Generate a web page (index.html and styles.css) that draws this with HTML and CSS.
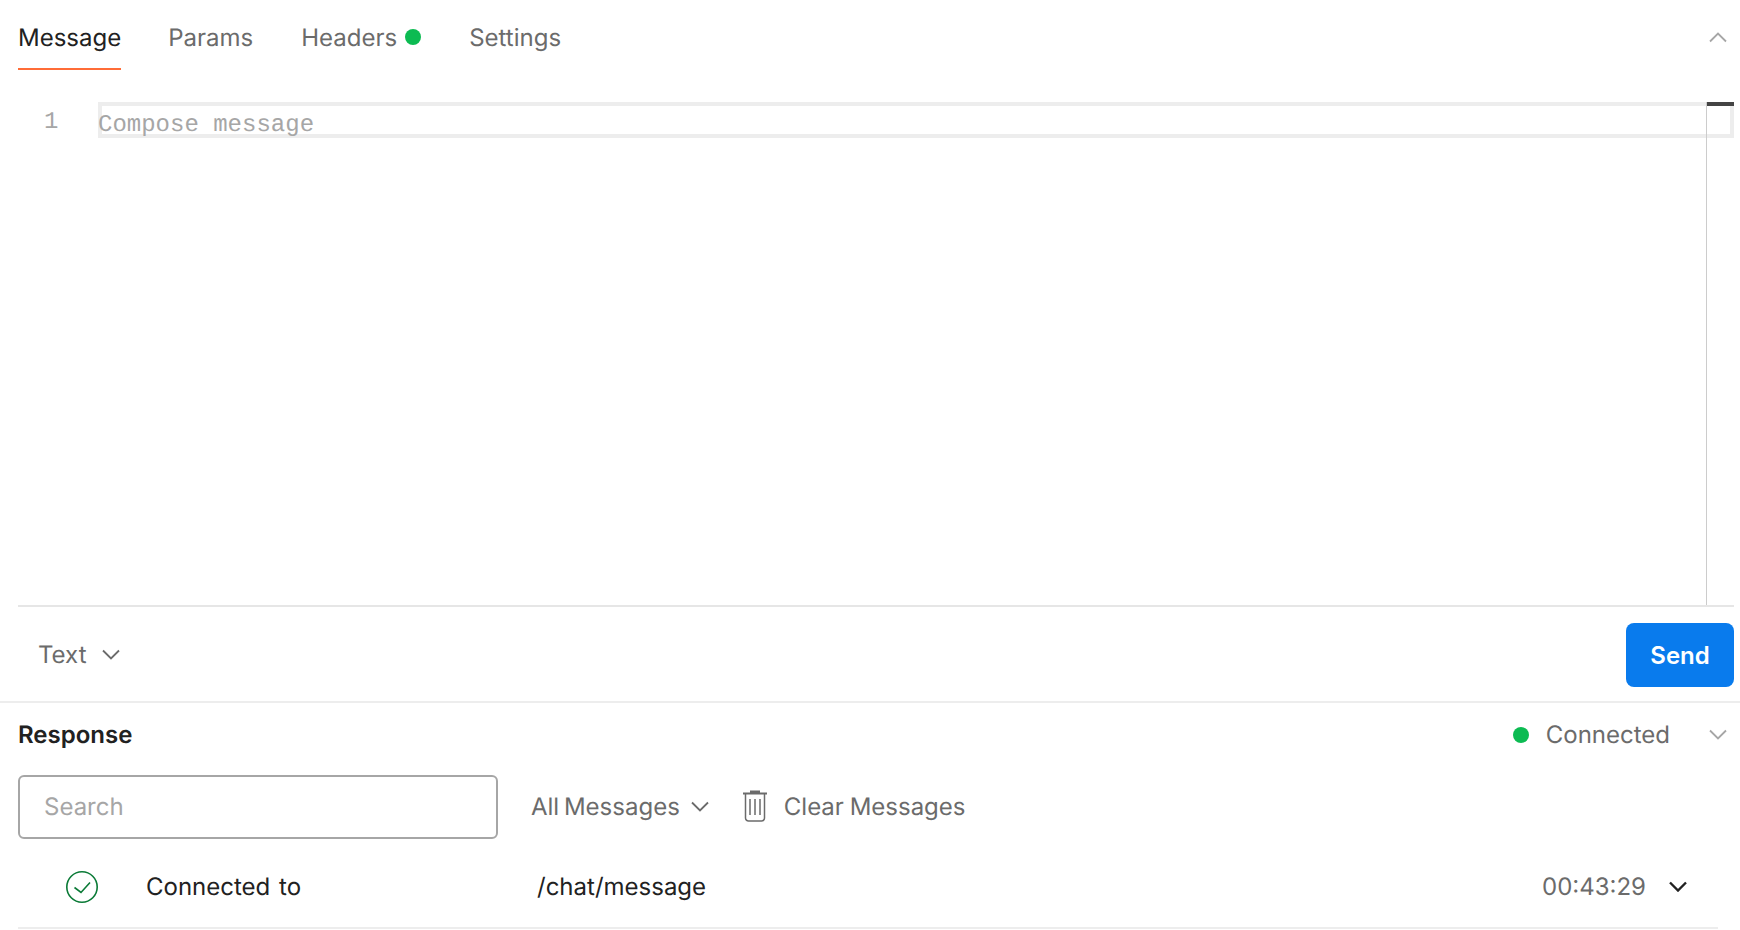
FILE: index.html
```html
<!DOCTYPE html>
<html lang="en">
<head>
<meta charset="utf-8">
<title>Message</title>
<link rel="stylesheet" href="styles.css">
</head>
<body>
<main class="app">
  <nav class="tabs">
    <a class="tab active">Message</a>
    <a class="tab">Params</a>
    <a class="tab">Headers<span class="dot tab-dot"></span></a>
    <a class="tab">Settings</a>
    <svg class="chev push" viewBox="0 0 18 11"><path d="M1 9.500l8-8 8 8"/></svg>
  </nav>
  <section class="editor">
    <div class="gutter">1</div>
    <div class="line">Compose message</div>
    <div class="scrollbar"></div>
  </section>
  <section class="composer">
    <div class="type">Text<svg class="chev dark" viewBox="0 0 18 11"><path d="M1 1.500l8 8 8-8"/></svg></div>
    <button class="send">Send</button>
  </section>
  <section class="response">
    <header class="resp-head">
      <h2 class="resp-title">Response</h2>
      <div class="status"><span class="dot"></span><span class="status-text">Connected</span></div>
      <svg class="chev head-chev" viewBox="0 0 18 11"><path d="M1 1.500l8 8 8-8"/></svg>
    </header>
    <div class="toolbar">
      <div class="search">Search</div>
      <div class="filter">All Messages<svg class="chev dark" viewBox="0 0 18 11"><path d="M1 1.500l8 8 8-8"/></svg></div>
      <div class="clear">
        <svg class="trash" viewBox="0 0 24 32"><path class="lid" d="M0 3.500h24M8 3V1.500h8V3"/><path d="M2.500 4v24a3 3 0 0 0 3 3h13a3 3 0 0 0 3-3V4M7 9v16M12 9v16M17 9v16"/></svg>
        <span>Clear Messages</span>
      </div>
    </div>
    <div class="row">
      <svg class="check" viewBox="0 0 32 32"><circle cx="16" cy="16" r="15.200"/><path d="M8.500 16.500l6.500 5 9-10"/></svg>
      <span class="row-label">Connected to</span>
      <span class="row-path">/chat/message</span>
      <span class="row-time">00:43:29</span>
      <svg class="chev black" viewBox="0 0 18 11"><path d="M1 1.500l8 8 8-8"/></svg>
    </div>
  </section>
</main>
</body>
</html>
```
FILE: styles.css
```css
* { box-sizing: border-box; }
html, body { margin: 0; height: 100%; background: #fff; }
body { font-family: Inter, "Liberation Sans", sans-serif; font-size: 24px; color: #6b6b6b; overflow: hidden; text-rendering: geometricPrecision; }
.app { display: flex; flex-direction: column; height: 930px; }

.tabs { display: flex; align-items: center; gap: 48px; height: 70px; padding: 0 12px 0 18px; flex: none; }
.tab { display: flex; align-items: center; height: 70px; border-bottom: 2px solid transparent; padding-top: 6px; }
.tab.active { color: #212121; border-bottom-color: #ff6c37; margin-right: -1px; }
.dot { display: block; width: 16px; height: 16px; border-radius: 50%; background: #0cbb52; flex: none; }
.tab-dot { margin-left: 8px; }
.chev { width: 18px; height: 11px; fill: none; stroke: #a6a6a6; stroke-width: 1.800; flex: none; }
.chev.dark { stroke: #6b6b6b; }
.chev.black { stroke: #212121; stroke-width: 2.400; }
.push { margin-left: auto; margin-top: 4px; margin-right: 1px; }

.editor { position: relative; display: flex; align-items: flex-start; height: 537px; margin: 0 6px 0 18px; padding-top: 32px; border-bottom: 2px solid #e6e6e6; flex: none; }
.gutter { width: 80px; padding-left: 26px; padding-top: 5px; font-family: "Liberation Mono", monospace; color: #a6a6a6; line-height: 32px; }
.line { flex: 1; height: 36px; border: 4px solid #ededed; font-family: "Liberation Mono", monospace; color: #a6a6a6; line-height: 40px; text-indent: -4px; }
.scrollbar { position: absolute; top: 32px; right: 0; bottom: 0; width: 28px; border-left: 1px solid #ccc; }
.scrollbar::before { content: ""; display: block; height: 4px; background: #444; }

.composer { display: flex; align-items: center; justify-content: space-between; height: 96px; padding: 0 6px 0 38px; border-bottom: 2px solid #ededed; flex: none; }
.type { display: flex; align-items: center; gap: 15px; }
.send { width: 108px; height: 64px; margin-top: 2px; border: 0; border-radius: 8px; background: #097bed; color: #fff; font: 600 24px Inter, "Liberation Sans", sans-serif; }

.response { display: flex; flex-direction: column; padding: 0 12px 0 18px; flex: 1; }
.resp-head { display: flex; align-items: center; height: 63px; flex: none; }
.resp-title { margin: 0 auto 0 0; font-size: 24px; font-weight: 600; color: #212121; }
.status { display: flex; align-items: center; gap: 17px; margin-right: 39px; }
.head-chev { margin-right: 1px; }

.toolbar { display: flex; align-items: center; height: 80px; flex: none; }
.search { width: 480px; height: 64px; margin-top: 2px; padding-left: 24px; border: 2px solid #a6a6a6; border-radius: 6px; color: #a6a6a6; line-height: 60px; }
.filter { display: flex; align-items: center; margin-left: 33px; gap: 11px; word-spacing: -2px; }
.clear { display: flex; align-items: center; gap: 17px; margin-left: 34px; word-spacing: -1px; }
.trash { width: 24px; height: 32px; fill: none; stroke: #6b6b6b; stroke-width: 1.500; }
.lid { stroke-width: 2; }

.row { display: flex; align-items: center; height: 83px; margin-right: 10px; padding-left: 48px; border-bottom: 2px solid #ededed; flex: none; }
.check { width: 32px; height: 32px; fill: none; stroke: #0a7a36; stroke-width: 1.600; flex: none; }
.row-label { width: 391px; margin-left: 48px; color: #212121; word-spacing: 2px; }
.row-path { color: #212121; }
.row-time { margin-left: auto; margin-right: 23px; }
.row .chev { margin-right: 31px; }
```
